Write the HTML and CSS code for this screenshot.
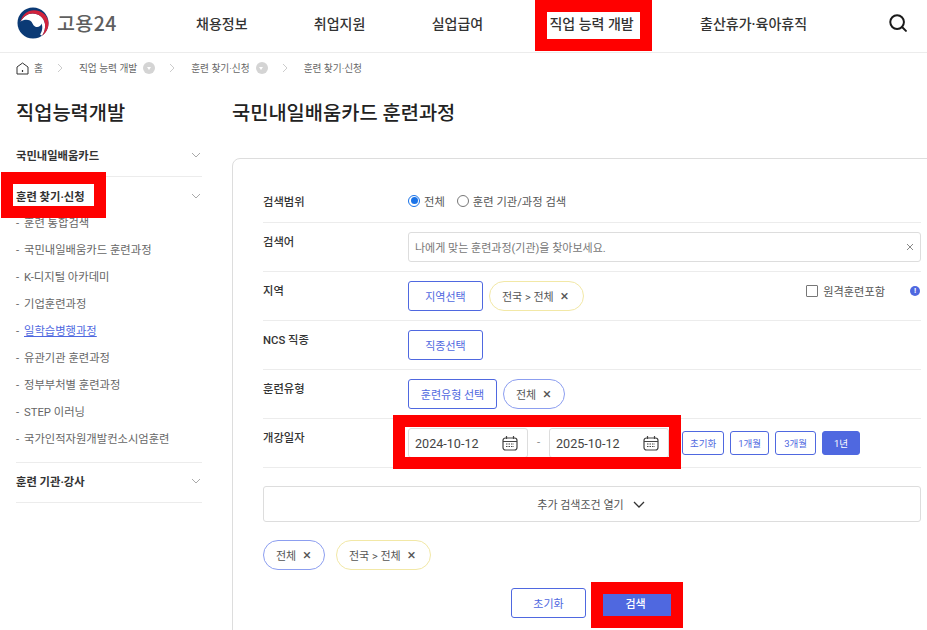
FILE: index.html
```html
<!DOCTYPE html>
<html lang="ko">
<head>
<meta charset="utf-8">
<title>국민내일배움카드 훈련과정</title>
<link rel="stylesheet" href="styles.css">
</head>
<body>
<header class="header">
  <a class="logo">
    <svg class="logo-mark" viewBox="0 0 32 32" width="32" height="32">
      <circle cx="16" cy="16" r="15.5" fill="#0b3a75"/>
      <path d="M3.600 14.500C6.500 9.500 10.500 6.500 15.500 6.500C21.500 6.500 27 10.500 28 17C28.500 21 27.500 25 25 28.800L18 24L6 18Z" fill="#fff"/>
      <path d="M3.600 14.500C5 7.500 10.500 3.200 17 3.200C25 3.200 31.500 9 31.500 16.500C31.500 21.500 29 26 25 28.800C27.500 25 28.500 21 28 17C27 10.500 21.500 6.500 15.500 6.500C10.500 6.500 6.500 9.500 3.600 14.500Z" fill="#d2233c"/>
      <path d="M3.600 14.500C6.500 12.500 10 12 13 13.500C15.500 15 15.500 18 18 19.500C20.500 21 24 19.500 24.500 16.500C26 20 25.500 25 22 29L10 29L3 20Z" fill="#0b3a75"/>
    </svg>
    <span class="logo-text">고용24</span>
  </a>
  <nav class="gnb">
    <a>채용정보</a><a>취업지원</a><a>실업급여</a><a>직업 능력 개발</a><a>출산휴가·육아휴직</a>
  </nav>
  <svg class="search-icon" viewBox="0 0 20 20" width="18" height="18" fill="none" stroke="#1a1a1a" stroke-width="2.200">
    <circle cx="9" cy="9" r="7.600"/><path d="M14.500 14.500 18.800 18.800" stroke-linecap="round"/>
  </svg>
</header>

<div class="breadcrumb">
  <svg class="home" viewBox="0 0 13 13" width="13" height="13" fill="none" stroke="#333" stroke-width="1">
    <path d="M1 5 6.500 1 12 5v7H1z"/><path d="M6.500 8v2" stroke-width="1.200"/>
  </svg>
  <span class="crumb crumb-home">홈</span>
  <svg class="sep" viewBox="0 0 6 10" width="6" height="10"><path d="M1 1l4 4-4 4" fill="none" stroke="#ccc"/></svg>
  <span class="crumb">직업 능력 개발</span><span class="crumb-drop"></span>
  <svg class="sep" viewBox="0 0 6 10" width="6" height="10"><path d="M1 1l4 4-4 4" fill="none" stroke="#ccc"/></svg>
  <span class="crumb">훈련 찾기·신청</span><span class="crumb-drop"></span>
  <svg class="sep" viewBox="0 0 6 10" width="6" height="10"><path d="M1 1l4 4-4 4" fill="none" stroke="#ccc"/></svg>
  <span class="crumb">훈련 찾기·신청</span>
</div>

<div class="page">
  <aside class="side">
    <h2 class="side-title">직업능력개발</h2>
    <div class="side-group">
      <div class="side-head side-head-first"><span>국민내일배움카드</span><svg class="chev" viewBox="0 0 10 6" width="10" height="6"><path d="M1 1l4 4 4-4" fill="none" stroke="#aaa"/></svg></div>
    </div>
    <div class="side-group">
      <div class="side-head side-head-open"><span>훈련 찾기·신청</span><svg class="chev" viewBox="0 0 10 6" width="10" height="6"><path d="M1 1l4 4 4-4" fill="none" stroke="#aaa"/></svg></div>
      <ul class="side-list">
        <li>훈련 통합검색</li>
        <li>국민내일배움카드 훈련과정</li>
        <li>K-디지털 아카데미</li>
        <li>기업훈련과정</li>
        <li><a class="current">일학습병행과정</a></li>
        <li>유관기관 훈련과정</li>
        <li>정부부처별 훈련과정</li>
        <li>STEP 이러닝</li>
        <li>국가인적자원개발컨소시엄훈련</li>
      </ul>
    </div>
    <div class="side-group">
      <div class="side-head side-head-last"><span>훈련 기관·강사</span><svg class="chev" viewBox="0 0 10 6" width="10" height="6"><path d="M1 1l4 4 4-4" fill="none" stroke="#aaa"/></svg></div>
    </div>
  </aside>

  <main class="main">
    <h1 class="title">국민내일배움카드 훈련과정</h1>
    <section class="card">
      <div class="row row-first">
        <div class="label">검색범위</div>
        <div class="value radios">
          <span class="radio on"></span><span class="opt">전체</span>
          <span class="radio"></span><span class="opt">훈련 기관/과정 검색</span>
        </div>
      </div>
      <div class="row">
        <div class="label">검색어</div>
        <div class="value">
          <div class="input"><span>나에게 맞는 훈련과정(기관)을 찾아보세요.</span>
            <svg viewBox="0 0 8 8" width="8" height="8"><path d="M1 1l6 6M7 1l-6 6" stroke="#888" fill="none"/></svg>
          </div>
        </div>
      </div>
      <div class="row">
        <div class="label">지역</div>
        <div class="value">
          <a class="btn">지역선택</a>
          <span class="chip yellow">전국 &gt; 전체 <b>×</b></span>
          <span class="remote"><span class="check"></span>원격훈련포함<span class="info">!</span></span>
        </div>
      </div>
      <div class="row">
        <div class="label">NCS 직종</div>
        <div class="value"><a class="btn">직종선택</a></div>
      </div>
      <div class="row">
        <div class="label">훈련유형</div>
        <div class="value">
          <a class="btn btn-wide">훈련유형 선택</a>
          <span class="chip blue">전체 <b>×</b></span>
        </div>
      </div>
      <div class="row">
        <div class="label">개강일자</div>
        <div class="value dates">
          <div class="date"><span>2024-10-12</span>
            <svg viewBox="0 0 16 16" width="16" height="16" fill="none" stroke="#444"><rect x="1" y="3" width="14" height="12" rx="2.500" stroke-width="1.200"/><path d="M1 6.500h14M4.500 1v3M11.500 1v3" stroke-width="1.200"/><path d="M4 9h8M4 11.500h8" stroke-dasharray="1.500 1" stroke-width="1.200"/></svg>
          </div>
          <span class="dash">-</span>
          <div class="date"><span>2025-10-12</span>
            <svg viewBox="0 0 16 16" width="16" height="16" fill="none" stroke="#444"><rect x="1" y="3" width="14" height="12" rx="2.500" stroke-width="1.200"/><path d="M1 6.500h14M4.500 1v3M11.500 1v3" stroke-width="1.200"/><path d="M4 9h8M4 11.500h8" stroke-dasharray="1.500 1" stroke-width="1.200"/></svg>
          </div>
          <a class="mini mini-first">초기화</a><a class="mini">1개월</a><a class="mini mini-wide">3개월</a><a class="mini active">1년</a>
        </div>
      </div>
      <button class="more">추가 검색조건 열기<svg viewBox="0 0 12 7" width="12" height="7"><path d="M1 1l5 5 5-5" fill="none" stroke="#333" stroke-width="1.300"/></svg></button>
      <div class="tags">
        <span class="chip blue">전체 <b>×</b></span>
        <span class="chip yellow">전국 &gt; 전체 <b>×</b></span>
      </div>
      <div class="actions">
        <a class="btn">초기화</a>
        <a class="btn primary">검색</a>
      </div>
    </section>
  </main>
</div>

<div class="mark mark-nav"></div>
<div class="mark mark-side"></div>
<div class="mark mark-date"></div>
<div class="mark mark-search"></div>
</body>
</html>
```

FILE: styles.css
```css
* { box-sizing: border-box; }
html, body { margin: 0; padding: 0; height: 630px; overflow: hidden; background: #fff; }
body {
  position: relative;
  font-family: Roboto, "Noto Sans CJK KR", sans-serif;
  color: #333;
  width: 927px;
}
a { color: inherit; text-decoration: none; }

.header {
  height: 53px;
  border-bottom: 1px solid #ececec;
  display: flex;
  align-items: center;
  padding: 0 20px 7px 17px;
}
.logo { display: flex; align-items: center; width: 179px; flex: none; }
.logo-mark { flex: none; }
.logo-text { margin-left: 8px; font-family: "Noto Sans CJK KR", sans-serif; font-size: 19.500px; font-weight: 500; color: #5f5f5f; letter-spacing: .4px; line-height: 24px; }
.gnb { display: flex; gap: 66.300px; font-size: 14px; font-weight: 500; color: #333; flex: 1; white-space: nowrap; }
.search-icon { flex: none; }

.breadcrumb {
  height: 34px;
  display: flex;
  align-items: center;
  padding: 0 0 4px 16px;
  font-size: 9.700px;
  color: #666;
}
.home { flex: none; }
.crumb { white-space: nowrap; }
.crumb-home { margin-left: 5px; }
.sep { margin: 0 16px 0 14px; flex: none; }
.crumb-drop {
  width: 12px; height: 12px; border-radius: 50%; background: #d4d4d4; margin-left: 6px; position: relative; flex: none;
}
.crumb-drop::after {
  content: ""; position: absolute; left: 3.500px; top: 5px;
  border: 2.500px solid transparent; border-top: 3px solid #fff; border-bottom: 0;
}

.page { display: flex; padding-left: 16px; }

.side { width: 186px; flex: none; margin-right: 30px; }
.side-title { margin: 0; font-size: 19.800px; font-weight: 500; color: #222; line-height: 30px; padding-top: 12px; height: 48px; }
.side-group { border-bottom: 1px solid #ececec; }
.side-head {
  display: flex; justify-content: space-between; align-items: center;
  height: 39px; font-size: 11.300px; font-weight: 700; color: #333;
}
.side-head-first { height: 41px; padding-bottom: 2px; }
.side-head-open { height: 38px; }
.side-head-last { padding-bottom: 3px; }
.chev { margin-right: 1px; }
.side-list { list-style: none; margin: -5px 0 9px; padding: 0; font-size: 11.300px; color: #666; }
.side-list li { height: 27px; line-height: 27px; white-space: nowrap; }
.side-list li::before { content: "-"; display: inline-block; width: 8px; }
.current { color: #4f68e0; text-decoration: underline; }

.main { width: 720px; flex: none; }
.title { margin: 0; font-size: 19.800px; font-weight: 500; color: #222; line-height: 30px; padding-top: 12px; height: 71px; }

.card {
  border: 1px solid #ddd;
  border-radius: 8px;
  padding: 20px 30px 40px;
  width: 720px;
}
.row {
  display: flex;
  height: 49px;
  border-bottom: 1px solid #ececec;
  padding-top: 9px;
}
.row-first { height: 44px; padding-top: 13px; }
.label { width: 145px; flex: none; font-size: 11.300px; font-weight: 500; color: #333; line-height: 20px; padding-top: 1px; }
.value { flex: 1; display: flex; align-items: flex-start; font-size: 11.300px; min-width: 0; }

.radios { align-items: center; height: 17px; }
.radio { width: 12px; height: 12px; border: 1px solid #777; border-radius: 50%; flex: none; margin-right: 4px; }
.radio.on { border-color: #1a73e8; position: relative; }
.radio.on::after { content: ""; position: absolute; inset: 1.500px; background: #1a73e8; border-radius: 50%; }
.opt { margin-right: 12px; color: #555; }

.input {
  width: 100%; height: 30px; border: 1px solid #ddd; border-radius: 3px;
  display: flex; justify-content: space-between; align-items: center;
  padding: 0 6px 0 6px; color: #777; font-size: 11px;
}

.btn {
  display: inline-flex; align-items: center; justify-content: center;
  width: 75px; height: 30px; border: 1px solid #4f68e0; border-radius: 3px;
  color: #4f68e0; font-size: 11px; font-weight: 400; flex: none; background: #fff;
}
.btn-wide { width: 89px; }
.chip {
  display: inline-flex; align-items: center; justify-content: center; gap: 4px;
  height: 30px; border-radius: 15px; border: 1px solid; padding: 0 13px 0 12px; font-size: 11px; color: #555; flex: none; margin-left: 6px; white-space: pre;
}
.chip b { font-weight: 400; color: #555; font-size: 15px; line-height: 1; }
.yellow { border-color: #f2e8a6; padding-right: 15px; }
.blue { border-color: #8c9ef0; }

.remote { margin-left: auto; display: flex; align-items: center; height: 20px; font-size: 11.200px; color: #555; }
.check { width: 12px; height: 12px; border: 1px solid #777; border-radius: 1px; margin-right: 5px; }
.info {
  width: 10px; height: 10px; border-radius: 50%; background: #4f68e0; color: #fff;
  font-size: 8px; line-height: 10px; text-align: center; font-weight: 700; margin: 0 1px 0 25px;
}

.date {
  width: 120px; height: 30px; border: 1px solid #ddd; border-radius: 3px;
  display: flex; justify-content: space-between; align-items: center;
  padding: 0 9px 0 6px; font-size: 12.600px; color: #444; flex: none;
}
.dash { width: 21px; height: 30px; line-height: 30px; text-align: center; color: #888; flex: none; }
.mini {
  height: 24px; margin-top: 3px; padding: 0 7px; display: inline-flex; align-items: center; justify-content: center;
  border: 1px solid #4f68e0; border-radius: 3px; color: #4f68e0; font-size: 9.500px; margin-left: 6px; flex: none; background: #fff;
}
.mini-first { margin-left: 13px; }
.mini-wide { min-width: 41px; }
.mini.active { background: #4f68e0; color: #fff; width: 38px; }

.more {
  display: flex; align-items: center; justify-content: center; gap: 9px;
  width: 100%; height: 36px; margin-top: 18px; padding: 0 2px 0 0; background: #fff;
  border: 1px solid #ddd; border-radius: 3px; font: inherit; font-size: 11px; color: #555;
}
.tags { display: flex; gap: 11px; margin-top: 18px; }
.tags .chip { margin-left: 0; }
.actions { display: flex; gap: 12px; justify-content: center; margin-top: 18px; }
.primary { background: #4f68e0; color: #fff; font-weight: 500; }

.mark { position: absolute; border: 12px solid #f00; pointer-events: none; }
.mark-nav { left: 535px; top: 0; width: 117px; height: 51px; }
.mark-side { left: 1px; top: 172px; width: 105px; height: 46px; }
.mark-date { left: 393px; top: 415px; width: 288px; height: 54px; }
.mark-search { left: 591px; top: 582px; width: 92px; height: 46px; }
```
